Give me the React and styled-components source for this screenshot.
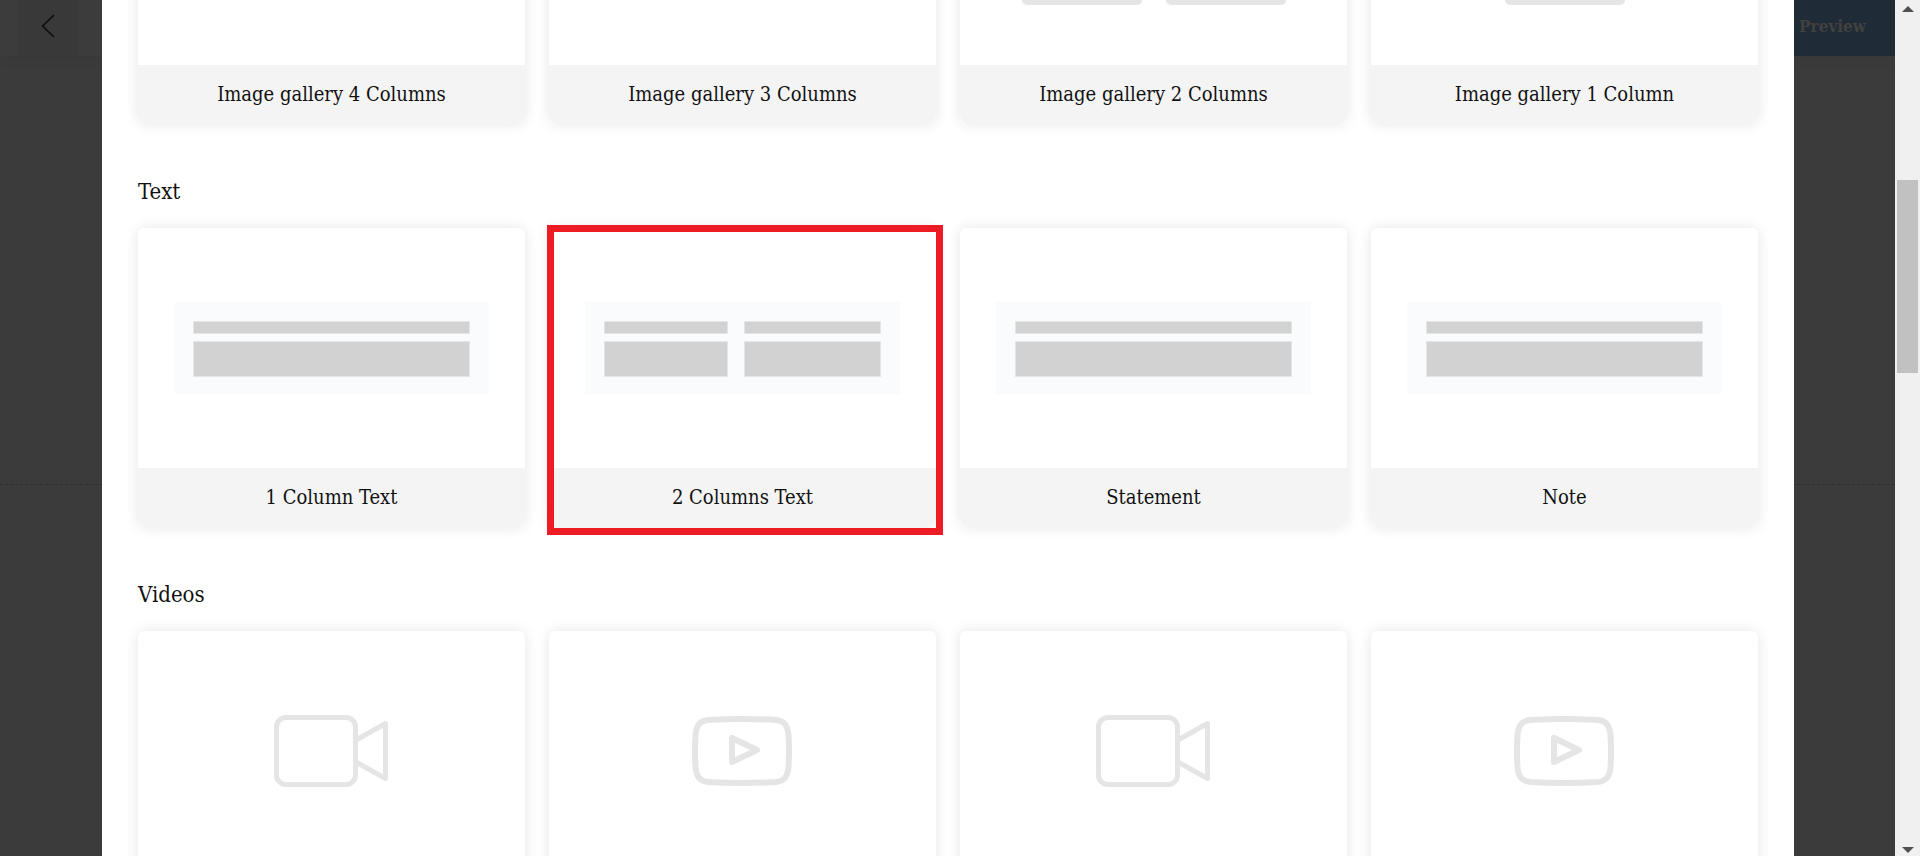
import React from "react";
import styled, { createGlobalStyle } from "styled-components";

const GlobalStyle = createGlobalStyle`
  * { box-sizing: border-box; }
  body {
    margin: 0;
    overflow: hidden;
    background: #3b3b3b;
    color: #111;
    font-family: "DejaVu Serif Condensed", "DejaVu Serif", serif;
  }
`;

const Screen = styled.div`
  position: relative;
  display: flex;
  height: 100vh;
  overflow: hidden;
`;

const Backdrop = styled.div`
  position: absolute;
  inset: 0 25px 0 0;
  display: flex;
  flex-direction: column;
`;

const TopBar = styled.header`
  display: flex;
  justify-content: space-between;
  height: 56px;
  padding-left: 18px;
  flex: none;
  background: #3c3c3c;
  box-shadow: 0 2px 14px rgba(0, 0, 0, 0.06);
`;

const BackButton = styled.button`
  display: flex;
  align-items: center;
  justify-content: center;
  width: 60px;
  padding: 0 0 4px;
  border: 0;
  background: #393939;
  color: #0c0c0c;
`;

const PreviewButton = styled.button`
  width: 160px;
  padding: 0 29px 4px 0;
  border: 0;
  background: #202b38;
  color: #41413f;
  font-family: inherit;
  font-size: 17px;
  font-weight: 700;
  text-align: right;
`;

const Canvas = styled.div`
  box-sizing: content-box;
  height: 50vh;
  border-bottom: 1px dashed #303030;
`;

const Main = styled.div`
  position: relative;
  flex: 1;
  min-width: 0;
  padding: 0 101px 0 102px;
`;

const Sheet = styled.main`
  height: 100%;
  padding: 0 36px;
  overflow: hidden;
  background: #fff;
`;

const Scrolled = styled.div`
  margin-top: -175px;
`;

const Section = styled.section`
  margin-bottom: 50px;
`;

const SectionTitle = styled.h2`
  margin: 0 0 18px;
  font-size: 22px;
  font-weight: 400;
  line-height: 36px;
`;

const Cards = styled.div`
  display: grid;
  grid-template-columns: repeat(4, minmax(0, 1fr));
  gap: 24px;
`;

const CardButton = styled.button`
  position: relative;
  display: flex;
  flex-direction: column;
  padding: 0;
  border: 0;
  border-radius: 6px;
  background: #fff;
  color: inherit;
  font: inherit;
  box-shadow: 0 0 14px rgba(0, 0, 0, 0.1);

  &::after {
    content: "";
    display: ${(p) => (p.$selected ? "block" : "none")};
    position: absolute;
    inset: -3px -7px -8px -2px;
    border: 7px solid #ed1c24;
  }
`;

const Thumbnail = styled.span`
  display: flex;
  align-items: center;
  justify-content: center;
  gap: 24px;
  width: 100%;
  height: 240px;
`;

const CardLabel = styled.span`
  width: 100%;
  border-radius: 0 0 8px 8px;
  background: #f4f4f4;
  font-size: 20px;
  line-height: 59px;
  text-align: center;
`;

const Tile = styled.span`
  width: ${(p) => p.$size}px;
  height: ${(p) => p.$size}px;
  border-radius: 5px;
  background: #e5e5e5;
`;

const TextBlock = styled.span`
  display: grid;
  grid-template-columns: ${(p) => (p.$columns === 2 ? "124fr 137fr" : "1fr")};
  grid-template-rows: 13px 36px;
  gap: 7px 16px;
  width: 315px;
  padding: 19px 19px 17px;
  background: #fafbfd;
`;

const Bar = styled.span`
  border: 1px solid #e4e5e7;
  background: #d2d2d2;
`;

const ScrollTrack = styled.div`
  position: relative;
  display: flex;
  flex-direction: column;
  align-items: center;
  justify-content: space-between;
  flex: none;
  width: 25px;
  padding: 6px 0 3px;
  background: #f0f0f0;
`;

const ScrollThumb = styled.div`
  position: absolute;
  top: 21%;
  left: 2px;
  width: 21px;
  height: 193px;
  background: #c1c1c1;
`;

const Arrow = styled.span`
  border: 6px solid transparent;
  border-top: ${(p) => (p.$up ? "0" : "6px solid #505050")};
  border-bottom: ${(p) => (p.$up ? "6px solid #505050" : "0")};
`;

function Gallery({ columns, size }) {
  return Array.from({ length: columns }, (_, i) => <Tile key={i} $size={size} />);
}

function TextPreview({ columns }) {
  return (
    <TextBlock $columns={columns}>
      {Array.from({ length: columns * 2 }, (_, i) => <Bar key={i} />)}
    </TextBlock>
  );
}

function CameraIcon() {
  return (
    <svg width="115" height="72" viewBox="0 0 115 72" fill="none" stroke="#e5e5e5" strokeWidth="5" strokeLinejoin="round" aria-hidden="true">
      <rect x="2.5" y="2.5" width="79" height="67" rx="9.5" />
      <path d="M82 25 111.500 8.500V63.500L82 47" />
    </svg>
  );
}

function PlayerIcon() {
  return (
    <svg width="101" height="70" viewBox="0 0 101 70" fill="none" stroke="#e5e5e5" strokeWidth="6" strokeLinejoin="round" aria-hidden="true">
      <path d="M16 4Q50 2 84 4C93 5 95.500 10 96.500 19Q97.500 35 96.500 51C95.500 60 93 65 84 66Q50 68 16 66C7 65 4.500 60 3.500 51Q2.500 35 3.500 19C4.500 10 7 5 16 4Z" />
      <path d="M40 22V46L65 34Z" />
    </svg>
  );
}

const sections = [
  {
    id: "gallery",
    cards: [
      { label: "Image gallery 4 Columns", preview: <Gallery columns={4} size={60} /> },
      { label: "Image gallery 3 Columns", preview: <Gallery columns={3} size={80} /> },
      { label: "Image gallery 2 Columns", preview: <Gallery columns={2} size={120} /> },
      { label: "Image gallery 1 Column", preview: <Gallery columns={1} size={120} /> },
    ],
  },
  {
    id: "text",
    title: "Text",
    cards: [
      { label: "1 Column Text", preview: <TextPreview columns={1} /> },
      { label: "2 Columns Text", preview: <TextPreview columns={2} />, selected: true },
      { label: "Statement", preview: <TextPreview columns={1} /> },
      { label: "Note", preview: <TextPreview columns={1} /> },
    ],
  },
  {
    id: "videos",
    title: "Videos",
    cards: [
      { preview: <CameraIcon />, name: "Video" },
      { preview: <PlayerIcon />, name: "Player" },
      { preview: <CameraIcon />, name: "Video" },
      { preview: <PlayerIcon />, name: "Player" },
    ],
  },
];

export default function App() {
  return (
    <>
      <GlobalStyle />
      <Screen>
        <Backdrop>
          <TopBar>
            <BackButton aria-label="Back">
              <svg width="14" height="24" viewBox="0 0 14 24" fill="none" stroke="currentColor" strokeWidth="1.700" strokeLinecap="round" strokeLinejoin="round">
                <path d="M12.500 1.500 1.500 12 12.500 22.500" />
              </svg>
            </BackButton>
            <PreviewButton>Preview</PreviewButton>
          </TopBar>
          <Canvas />
        </Backdrop>
        <Main>
          <Sheet>
            <Scrolled>
              {sections.map((section) => (
                <Section key={section.id}>
                  {section.title && <SectionTitle>{section.title}</SectionTitle>}
                  <Cards>
                    {section.cards.map((card, i) => (
                      <CardButton key={i} $selected={card.selected} aria-label={card.name}>
                        <Thumbnail>{card.preview}</Thumbnail>
                        {card.label && <CardLabel>{card.label}</CardLabel>}
                      </CardButton>
                    ))}
                  </Cards>
                </Section>
              ))}
            </Scrolled>
          </Sheet>
        </Main>
        <ScrollTrack aria-hidden="true">
          <Arrow $up />
          <ScrollThumb />
          <Arrow />
        </ScrollTrack>
      </Screen>
    </>
  );
}
